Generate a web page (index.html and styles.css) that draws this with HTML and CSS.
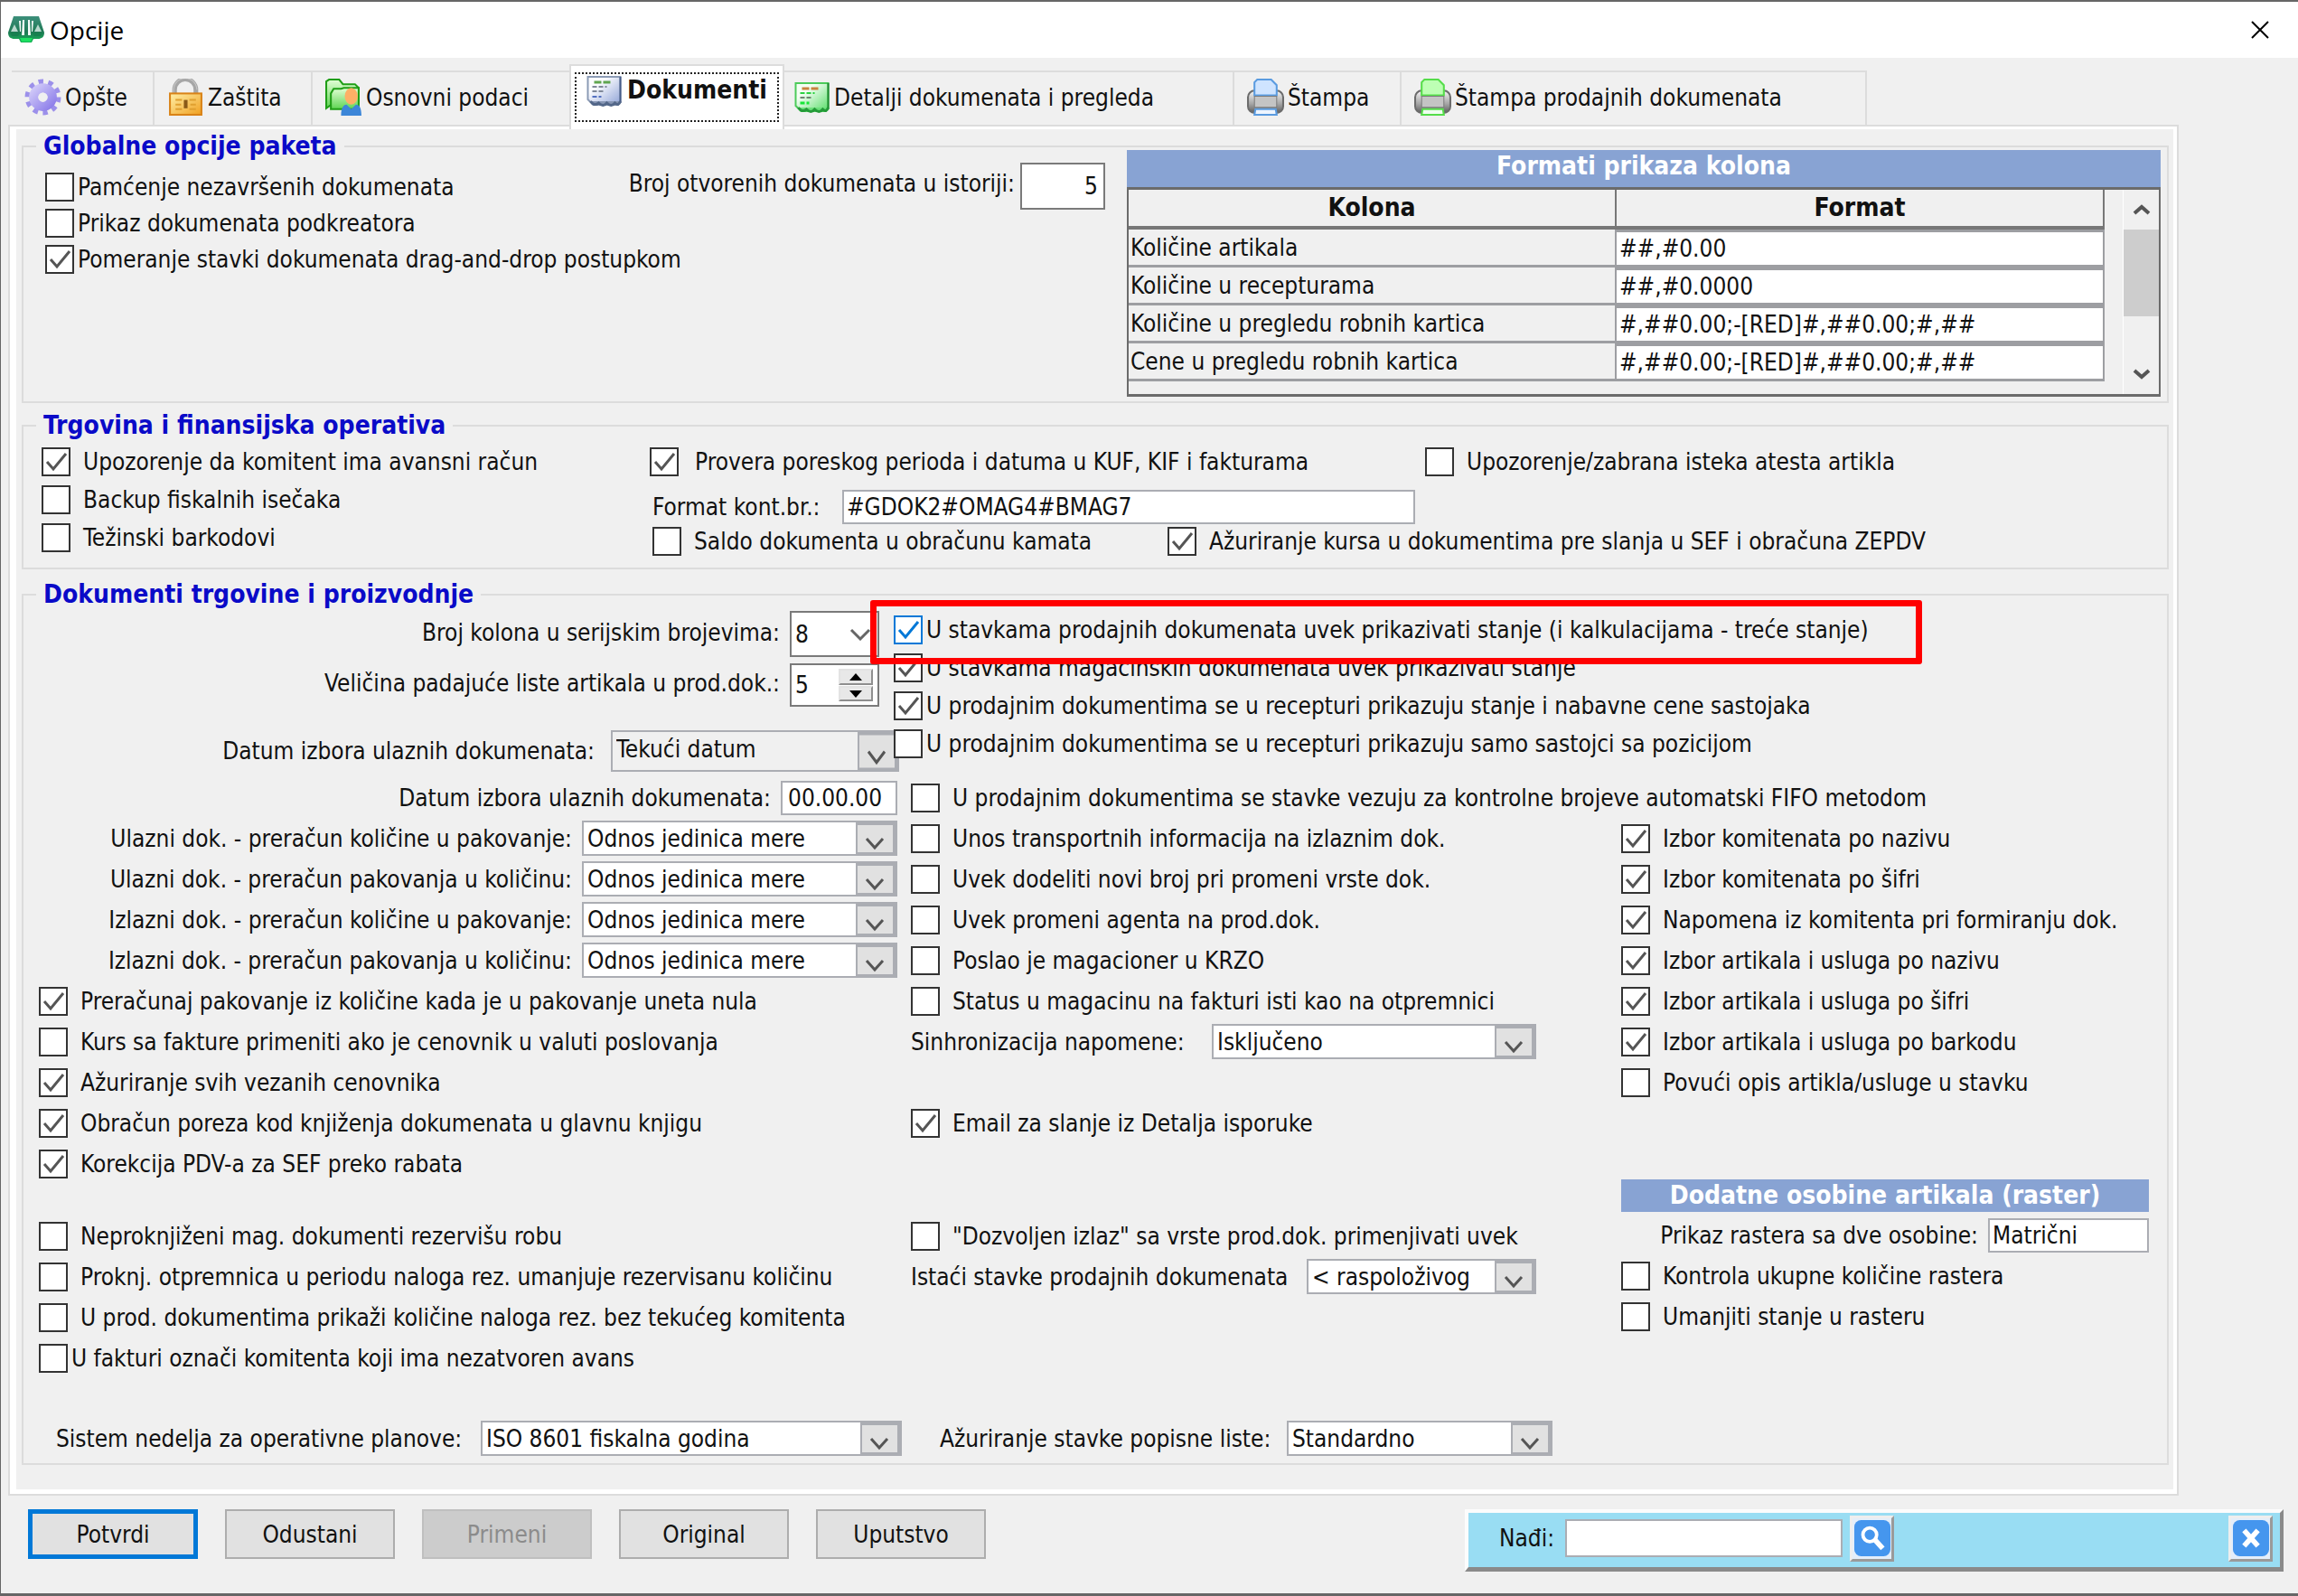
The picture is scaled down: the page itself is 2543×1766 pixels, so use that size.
FILE: index.html
```html
<!DOCTYPE html>
<html lang="sr-Latn">
<head>
<meta charset="utf-8">
<title>Opcije</title>
<link rel="stylesheet" href="styles.css">
</head>
<body>
<div class="window">
  <header class="titlebar">
    <svg class="app-icon" viewBox="0 0 40 32" aria-hidden="true">
      <defs><linearGradient id="scales" x1="0" y1="0" x2="0" y2="1"><stop offset="0" stop-color="#3d8f7b"/><stop offset=".6" stop-color="#1f7a55"/><stop offset="1" stop-color="#14b455"/></linearGradient></defs>
      <path d="M6 1h28l6 18c0 5-3 7-7 7h-5l-2 4H14l-2-4H7c-4 0-7-2-7-7z" fill="url(#scales)"/>
      <path d="M12 6h2v12h-1zM28 6h-2v12h1zM16 5h2v17h-3zM24 5h-2v17h3z" fill="#f4fbf8"/>
      <path d="M7 10l4 8H3zM33 10l4 8h-8z" fill="#b9d8cd"/>
      <path d="M2 19h11l-2 4H4zM27 19h11l-2 4h-7z" fill="#17804f"/>
      <path d="M13 25h14l-2 4H15z" fill="#1de060"/>
    </svg>
    <h1 class="title">Opcije</h1>
    <button class="close" type="button" aria-label="Zatvori"><svg viewBox="0 0 20 20"><path d="M1 1l18 18M19 1L1 19" stroke="#000" stroke-width="2"/></svg></button>
  </header>

  <nav class="tabs" role="tablist">
    <button class="tab tab-general" type="button" role="tab">
      <svg class="icon" viewBox="0 0 40 40" aria-hidden="true">
        <defs><linearGradient id="gear" x1="0" y1="0" x2="1" y2="1"><stop offset="0" stop-color="#cfc8f8"/><stop offset="1" stop-color="#8f80ea"/></linearGradient></defs>
        <circle cx="20" cy="20" r="16" fill="none" stroke="#9c90ea" stroke-width="7" stroke-dasharray="5 5.05"/>
        <circle cx="20" cy="20" r="10" fill="none" stroke="url(#gear)" stroke-width="10"/>
        <circle cx="20" cy="20" r="5" fill="#f0f0f0"/>
      </svg>Opšte</button>
    <button class="tab tab-lock" type="button" role="tab">
      <svg class="icon" viewBox="0 0 40 40" aria-hidden="true">
        <defs><linearGradient id="lock" x1="0" y1="0" x2="1" y2="1"><stop offset="0" stop-color="#fff0a8"/><stop offset="1" stop-color="#f0a020"/></linearGradient></defs>
        <path d="M8 17V12a11 11 0 0 1 23 0v5" fill="none" stroke="#a6a6a6" stroke-width="5"/>
        <path d="M7 17V12a12 12 0 0 1 25 0" fill="none" stroke="#c9c9c9" stroke-width="1"/>
        <rect x="3" y="16" width="34" height="23" fill="url(#lock)" stroke="#d98317" stroke-width="2"/>
        <path d="M9 23h7M24 23h7M9 28h6M25 28h6M9 33h7M24 33h7" stroke="#e0a030" stroke-width="2"/>
        <path d="M20 23v9" stroke="#8a5a18" stroke-width="4"/>
      </svg>Zaštita</button>
    <button class="tab tab-basic" type="button" role="tab">
      <svg class="icon" viewBox="0 0 40 40" aria-hidden="true">
        <defs><linearGradient id="folder" x1="0" y1="0" x2="0" y2="1"><stop offset="0" stop-color="#e2ffd6"/><stop offset="1" stop-color="#5ed452"/></linearGradient></defs>
        <path d="M1 3l3-2h11l4 5h13l4 4v17H8l-7 5z" fill="url(#folder)" stroke="#1f9e16" stroke-width="2"/>
        <path d="M6 33V16l3-5h8l3-1h16v23z" fill="url(#folder)" stroke="#1f9e16" stroke-width="2"/>
        <path d="M17 40c0-9 3-12 6-12l5 5 5-5c4 0 6 4 6 12z" fill="#3c86d8"/>
        <ellipse cx="28" cy="19" rx="7" ry="9" fill="#fdb066"/>
      </svg>Osnovni podaci</button>
    <button class="tab tab-docs active" type="button" role="tab" aria-selected="true">
      <span class="focus">
      <svg class="icon icon-doc" viewBox="0 0 40 34" aria-hidden="true">
        <defs><linearGradient id="docb" x1="0" y1="0" x2="1" y2="1"><stop offset=".3" stop-color="#fbfcff"/><stop offset="1" stop-color="#8ea2d6"/></linearGradient></defs>
        <path d="M2 1h36v27l-3 4H8l-6-6z" fill="url(#docb)" stroke="#8c9bb5" stroke-width="2"/>
        <path d="M38 1v29" stroke="#465c88" stroke-width="2"/>
        <path d="M9 7h19" stroke="#5fa54f" stroke-width="3" stroke-dasharray="8 2"/>
        <path d="M7 12h16M7 17h14" stroke="#7f8899" stroke-width="2" stroke-dasharray="5 2"/><path d="M7 23h10" stroke="#5370c0" stroke-width="2" stroke-dasharray="5 2"/>
        <path d="M5 28q4 6 9 2q5 5 9 0q5 5 9 0q4 4 6-2" fill="#8796b4" stroke="#536789" stroke-width="3"/>
      </svg>Dokumenti</span></button>
    <button class="tab tab-details" type="button" role="tab">
      <svg class="icon icon-doc" viewBox="0 0 40 34" aria-hidden="true">
        <defs><linearGradient id="docg" x1="0" y1="0" x2="1" y2="1"><stop offset=".3" stop-color="#f4fff4"/><stop offset="1" stop-color="#58dc68"/></linearGradient></defs>
        <path d="M2 1h36v27l-3 4H8l-6-6z" fill="url(#docg)" stroke="#4ccb5a" stroke-width="2"/>
        <path d="M38 1v29" stroke="#1f8b30" stroke-width="2"/>
        <path d="M9 7h19" stroke="#c88440" stroke-width="3" stroke-dasharray="8 2"/>
        <path d="M7 12h16" stroke="#2bd23f" stroke-width="2" stroke-dasharray="5 2"/><path d="M7 17h14" stroke="#6d8670" stroke-width="2" stroke-dasharray="5 2"/><path d="M7 23h10" stroke="#16e636" stroke-width="3" stroke-dasharray="5 2"/>
        <path d="M5 28q4 6 9 2q5 5 9 0q5 5 9 0q4 4 6-2" fill="#6be07a" stroke="#249a38" stroke-width="3"/>
      </svg>Detalji dokumenata i pregleda</button>
    <button class="tab tab-print" type="button" role="tab">
      <svg class="icon" viewBox="0 0 40 40" aria-hidden="true">
        <defs><linearGradient id="metal" x1="0" y1="0" x2="0" y2="1"><stop offset="0" stop-color="#f4f4f4"/><stop offset=".6" stop-color="#a4a4a4"/><stop offset="1" stop-color="#5e5e5e"/></linearGradient></defs>
        <rect x="1" y="13" width="38" height="24" rx="7" fill="url(#metal)" stroke="#6c6c6c" stroke-width="2"/>
        <path d="M8 18V4l3-3h15l6 6v11z" fill="#cfe4ff" stroke="#5a9be0" stroke-width="2"/>
        <path d="M8 19h24v12H8z" fill="#c4c4c4" stroke="#7c7c7c"/>
        <path d="M9 33h22l1 6H8z" fill="#eef5ff" stroke="#5a9be0" stroke-width="2"/>
      </svg>Štampa</button>
    <button class="tab tab-print-sales" type="button" role="tab">
      <svg class="icon" viewBox="0 0 40 40" aria-hidden="true">
        <rect x="1" y="13" width="38" height="24" rx="7" fill="url(#metal)" stroke="#6c6c6c" stroke-width="2"/>
        <path d="M8 18V4l3-3h15l6 6v11z" fill="#bdffb4" stroke="#55dd4a" stroke-width="2"/>
        <path d="M8 19h24v12H8z" fill="#c4c4c4" stroke="#7c7c7c"/>
        <path d="M9 33h22l1 6H8z" fill="#effff0" stroke="#55dd4a" stroke-width="2"/>
      </svg>Štampa prodajnih dokumenata</button>
  </nav>

  <main class="panel"><div class="panel-inner">
    <fieldset class="group">
      <legend>Globalne opcije paketa</legend>
      <div class="global">
        <div class="global-left">
          <div class="global-checks">
            <label class="check tight"><input type="checkbox">Pamćenje nezavršenih dokumenata</label>
            <label class="check tight"><input type="checkbox">Prikaz dokumenata podkreatora</label>
            <label class="check tight"><input type="checkbox" checked>Pomeranje stavki dokumenata drag-and-drop postupkom</label>
          </div>
          <div class="history"><label for="hist">Broj otvorenih dokumenata u istoriji:</label><input class="text dark" id="hist" type="text" value="5"></div>
        </div>
        <section class="formats">
          <h2 class="banner">Formati prikaza kolona</h2>
          <div class="frame">
            <table>
              <thead><tr><th>Kolona</th><th>Format</th></tr></thead>
              <tbody>
                <tr><td>Količine artikala</td><td><input type="text" aria-label="Količine artikala" value="##,#0.00"></td></tr>
                <tr><td>Količine u recepturama</td><td><input type="text" aria-label="Količine u recepturama" value="##,#0.0000"></td></tr>
                <tr><td>Količine u pregledu robnih kartica</td><td><input type="text" aria-label="Količine u pregledu robnih kartica" value="#,##0.00;-[RED]#,##0.00;#,##"></td></tr>
                <tr><td>Cene u pregledu robnih kartica</td><td><input type="text" aria-label="Cene u pregledu robnih kartica" value="#,##0.00;-[RED]#,##0.00;#,##"></td></tr>
              </tbody>
            </table>
            <div class="scrollbar" aria-hidden="true">
              <svg class="arrow" viewBox="0 0 20 12"><path d="M2 10l8-7 8 7" fill="none" stroke="#555" stroke-width="4"/></svg>
              <div class="thumb"></div>
              <svg class="arrow" viewBox="0 0 20 12"><path d="M2 2l8 7 8-7" fill="none" stroke="#555" stroke-width="4"/></svg>
            </div>
          </div>
        </section>
      </div>
    </fieldset>

    <fieldset class="group group-trade">
      <legend>Trgovina i finansijska operativa</legend>
      <div class="trade">
        <div class="trade-left">
          <label class="check"><input type="checkbox" checked>Upozorenje da komitent ima avansni račun</label>
          <label class="check"><input type="checkbox">Backup fiskalnih isečaka</label>
          <label class="check"><input type="checkbox">Težinski barkodovi</label>
        </div>
        <div class="trade-right">
          <div class="trade-row first">
            <label class="check wide"><input type="checkbox" checked>Provera poreskog perioda i datuma u KUF, KIF i fakturama</label>
            <label class="check"><input type="checkbox">Upozorenje/zabrana isteka atesta artikla</label>
          </div>
          <div class="trade-format"><label for="fmt">Format kont.br.:</label><input class="text" id="fmt" type="text" value="#GDOK2#OMAG4#BMAG7"></div>
          <div class="trade-row last">
            <label class="check"><input type="checkbox">Saldo dokumenta u obračunu kamata</label>
            <label class="check"><input type="checkbox" checked>Ažuriranje kursa u dokumentima pre slanja u SEF i obračuna ZEPDV</label>
          </div>
        </div>
      </div>
    </fieldset>

    <fieldset class="group group-docs">
      <legend>Dokumenti trgovine i proizvodnje</legend>
      <div class="docs-top">
        <div class="docs-top-left">
          <div class="field serials"><label for="ser">Broj kolona u serijskim brojevima:</label><select class="plain" id="ser"><option>8</option></select></div>
          <div class="field list-size"><label for="vel">Veličina padajuće liste artikala u prod.dok.:</label>
            <span class="spin"><input id="vel" type="text" value="5">
              <span class="spin-buttons"><button type="button" aria-label="Više"><svg viewBox="0 0 14 8"><path d="M7 0l7 8H0z"/></svg></button><button type="button" aria-label="Manje"><svg viewBox="0 0 14 8"><path d="M0 0h14L7 8z"/></svg></button></span></span></div>
          <div class="field date-kind"><label for="dat1">Datum izbora ulaznih dokumenata:</label><select id="dat1" disabled><option>Tekući datum</option></select></div>
        </div>
        <div class="docs-top-right">
          <label class="check tight highlight"><input type="checkbox" checked>U stavkama prodajnih dokumenata uvek prikazivati stanje (i kalkulacijama - treće stanje)</label>
          <label class="check tight"><input type="checkbox" checked>U stavkama magacinskih dokumenata uvek prikazivati stanje</label>
          <label class="check tight"><input type="checkbox" checked>U prodajnim dokumentima se u recepturi prikazuju stanje i nabavne cene sastojaka</label>
          <label class="check tight"><input type="checkbox">U prodajnim dokumentima se u recepturi prikazuju samo sastojci sa pozicijom</label>
        </div>
      </div>

      <div class="docs-main">
        <div class="col">
          <div class="field"><label for="dat2">Datum izbora ulaznih dokumenata:</label><input class="text date" id="dat2" type="text" value="00.00.00"></div>
          <div class="field"><label for="u1">Ulazni dok. - preračun količine u pakovanje:</label><select class="unit" id="u1"><option>Odnos jedinica mere</option></select></div>
          <div class="field"><label for="u2">Ulazni dok. - preračun pakovanja u količinu:</label><select class="unit" id="u2"><option>Odnos jedinica mere</option></select></div>
          <div class="field"><label for="u3">Izlazni dok. - preračun količine u pakovanje:</label><select class="unit" id="u3"><option>Odnos jedinica mere</option></select></div>
          <div class="field"><label for="u4">Izlazni dok. - preračun pakovanja u količinu:</label><select class="unit" id="u4"><option>Odnos jedinica mere</option></select></div>
          <div class="checks">
            <label class="check"><input type="checkbox" checked>Preračunaj pakovanje iz količine kada je u pakovanje uneta nula</label>
            <label class="check"><input type="checkbox">Kurs sa fakture primeniti ako je cenovnik u valuti poslovanja</label>
            <label class="check"><input type="checkbox" checked>Ažuriranje svih vezanih cenovnika</label>
            <label class="check"><input type="checkbox" checked>Obračun poreza kod knjiženja dokumenata u glavnu knjigu</label>
            <label class="check"><input type="checkbox" checked>Korekcija PDV-a za SEF preko rabata</label>
          </div>
          <div class="checks lower">
            <label class="check"><input type="checkbox">Neproknjiženi mag. dokumenti rezervišu robu</label>
            <label class="check"><input type="checkbox">Proknj. otpremnica u periodu naloga rez. umanjuje rezervisanu količinu</label>
            <label class="check"><input type="checkbox">U prod. dokumentima prikaži količine naloga rez. bez tekućeg komitenta</label>
            <label class="check tight"><input type="checkbox">U fakturi označi komitenta koji ima nezatvoren avans</label>
          </div>
        </div>

        <div class="col">
          <label class="check"><input type="checkbox">U prodajnim dokumentima se stavke vezuju za kontrolne brojeve automatski FIFO metodom</label>
          <label class="check"><input type="checkbox">Unos transportnih informacija na izlaznim dok.</label>
          <label class="check"><input type="checkbox">Uvek dodeliti novi broj pri promeni vrste dok.</label>
          <label class="check"><input type="checkbox">Uvek promeni agenta na prod.dok.</label>
          <label class="check"><input type="checkbox">Poslao je magacioner u KRZO</label>
          <label class="check"><input type="checkbox">Status u magacinu na fakturi isti kao na otpremnici</label>
          <div class="pair"><label for="sin">Sinhronizacija napomene:</label><select class="sync" id="sin"><option>Isključeno</option></select></div>
          <label class="check skip"><input type="checkbox" checked>Email za slanje iz Detalja isporuke</label>
          <div class="lower skip">
            <label class="check"><input type="checkbox">"Dozvoljen izlaz" sa vrste prod.dok. primenjivati uvek</label>
            <div class="pair"><label for="ist">Istaći stavke prodajnih dokumenata</label><select class="mark" id="ist"><option>&lt; raspoloživog</option></select></div>
          </div>
        </div>

        <div class="col">
          <label class="check skip"><input type="checkbox" checked>Izbor komitenata po nazivu</label>
          <label class="check"><input type="checkbox" checked>Izbor komitenata po šifri</label>
          <label class="check"><input type="checkbox" checked>Napomena iz komitenta pri formiranju dok.</label>
          <label class="check"><input type="checkbox" checked>Izbor artikala i usluga po nazivu</label>
          <label class="check"><input type="checkbox" checked>Izbor artikala i usluga po šifri</label>
          <label class="check"><input type="checkbox" checked>Izbor artikala i usluga po barkodu</label>
          <label class="check"><input type="checkbox">Povući opis artikla/usluge u stavku</label>
          <section class="raster">
            <h2 class="banner">Dodatne osobine artikala (raster)</h2>
            <div class="field"><label for="ras">Prikaz rastera sa dve osobine:</label><input class="text matrix" id="ras" type="text" value="Matrični"></div>
            <label class="check"><input type="checkbox">Kontrola ukupne količine rastera</label>
            <label class="check"><input type="checkbox">Umanjiti stanje u rasteru</label>
          </section>
        </div>
      </div>

      <div class="docs-bottom">
        <label for="sis">Sistem nedelja za operativne planove:</label><select class="weeks" id="sis"><option>ISO 8601 fiskalna godina</option></select>
        <label class="second" for="azu">Ažuriranje stavke popisne liste:</label><select class="census" id="azu"><option>Standardno</option></select>
      </div>
    </fieldset>
  </div></main>

  <footer class="footer">
    <div class="buttons">
      <button class="btn default" type="button">Potvrdi</button>
      <button class="btn" type="button">Odustani</button>
      <button class="btn" type="button" disabled>Primeni</button>
      <button class="btn" type="button">Original</button>
      <button class="btn" type="button">Uputstvo</button>
    </div>
    <div class="search">
      <label for="find">Nađi:</label><input class="text" id="find" type="text">
      <button class="tool" type="button" aria-label="Traži"><svg viewBox="0 0 42 42"><rect width="42" height="42" rx="8" fill="#4596ee"/><circle cx="18" cy="17" r="8" fill="none" stroke="#fff" stroke-width="4"/><path d="M24 23l9 10" stroke="#fff" stroke-width="6"/></svg></button>
      <button class="tool end" type="button" aria-label="Zatvori pretragu"><svg viewBox="0 0 42 42"><rect width="42" height="42" rx="8" fill="#4596ee"/><path d="M13 12l16 18M29 12L13 30" stroke="#fff" stroke-width="6"/></svg></button>
    </div>
  </footer>
</div>
</body>
</html>
```
FILE: styles.css
```css
*, *::after { box-sizing: border-box; }

body {
  margin: 0;
  background: #f0f0f0;
  color: #111;
  font-family: "DejaVu Sans Condensed", "DejaVu Sans", sans-serif;
  font-size: 26px;
  line-height: 32px;
}

input, select, button {
  margin: 0;
  font: inherit;
  color: inherit;
  border-radius: 0;
}

label { white-space: nowrap; }

.window {
  min-height: 100vh;
  display: flex;
  flex-direction: column;
  border: solid #666;
  border-width: 2px 0 3px 1px;
}

/* Title bar */
.titlebar {
  display: flex;
  align-items: center;
  gap: 6px;
  height: 62px;
  padding: 0 32px 0 8px;
  background: #fff;
}
.app-icon { width: 40px; height: 32px; }
.title {
  margin: 0;
  font: 400 28px/40px "Open Sans", sans-serif;
  color: #000;
}
.close {
  margin-left: auto;
  padding: 0;
  border: 0;
  background: none;
  line-height: 0;
}
.close svg { width: 20px; height: 20px; }

/* Tabs */
.tabs {
  display: flex;
  align-items: flex-end;
  padding: 7px 0 0 12px;
}
.tab {
  display: flex;
  align-items: center;
  gap: 4px;
  height: 60px;
  padding: 0 0 3px 14px;
  border: solid #dcdcdc;
  border-width: 2px 2px 0 0;
  background: #f0f0f0;
  white-space: nowrap;
}
.icon { width: 41px; height: 41px; flex: none; }
.icon-doc { height: 34px; }
.tab-general { width: 158px; }
.tab-lock { width: 175px; }
.tab-basic { width: 284px; border-right: 0; }
.tab-docs { width: 238px; }
.tab-details { width: 498px; padding-left: 10px; }
.tab-print { width: 185px; }
.tab-print-sales { width: 515px; }
.tab.active {
  position: relative;
  height: 72px;
  margin-bottom: -5px;
  padding: 7px 4px 8px;
  border-left-width: 2px;
  background: #fff;
  font-size: 28px;
  font-weight: 700;
}
.focus {
  display: flex;
  flex: 1;
  gap: 5px;
  height: 55px;
  padding: 2px 0 0 10px;
  border: 2px dotted #222;
}

/* Tab page */
.panel {
  margin: 0 132px 0 8px;
  padding: 3px 4px 5px 7px;
  border: 2px solid #dcdcdc;
  background: #fff;
}
.panel-inner {
  padding: 1px 5px 27px 6px;
  background: #f0f0f0;
}

.group {
  min-width: 0;
  margin: 0;
  padding: 0;
  border: 2px solid #dcdcdc;
}
.group-trade { margin-top: 7px; }
.group-docs { margin-top: 10px; }
legend {
  margin-left: 14px;
  padding: 0 8px;
  color: #0a0ac8;
  font-size: 28px;
  font-weight: 700;
  line-height: 36px;
}

/* Check boxes */
.check {
  display: flex;
  align-items: center;
  gap: 14px;
  height: 45px;
}
.check.tight { gap: 4px; }
.check.wide { gap: 18px; }
.check input {
  position: relative;
  appearance: none;
  flex: none;
  width: 32px;
  height: 32px;
  border: 2px solid #333;
  background: #fff;
}
.check input:checked {
  background: #fff url("data:image/svg+xml,%3Csvg xmlns='http://www.w3.org/2000/svg' viewBox='0 0 28 28'%3E%3Cpath d='M4 14l7 8L25 5' fill='none' stroke='%23555' stroke-width='3'/%3E%3C/svg%3E") center / 28px 28px no-repeat;
}

/* Text boxes and drop-downs */
.text {
  min-width: 0;
  height: 38px;
  padding: 0 3px;
  border: 2px solid #abadb3;
  background: #fff;
}
select {
  appearance: none;
  height: 39px;
  padding: 0 50px 0 4px;
  border: 2px solid #abadb3;
  background: #fff url("data:image/svg+xml,%3Csvg xmlns='http://www.w3.org/2000/svg' viewBox='0 0 44 35' preserveAspectRatio='none'%3E%3Cpath d='M0 0h44v35H0z' fill='%23abadb3'/%3E%3Cpath d='M2 3h39v30H2z' fill='%23e1e1e1'/%3E%3Cpath d='M12 18l9 10 9-10' fill='none' stroke='%23555' stroke-width='3'/%3E%3C/svg%3E") right center / 44px 100% no-repeat;
}
select:disabled { background-color: #f0f0f0; color: #111; opacity: 1; }
select.plain {
  border-color: #7a7a7a;
  background: #fff url("data:image/svg+xml,%3Csvg xmlns='http://www.w3.org/2000/svg' viewBox='0 0 24 14'%3E%3Cpath d='M2 2l10 10L22 2' fill='none' stroke='%23666' stroke-width='3'/%3E%3C/svg%3E") right 7px center / 24px 14px no-repeat;
}

.banner {
  margin: 0;
  background: #88a3d3;
  color: #fff;
  font-size: 28px;
  font-weight: 700;
  line-height: 36px;
  text-align: center;
}

.field {
  display: flex;
  align-items: center;
  justify-content: flex-end;
  gap: 11px;
  height: 45px;
}

/* Global options */
.global {
  display: grid;
  grid-template-columns: 1173fr 1144fr;
  gap: 24px;
  padding: 0 7px 5px 24px;
}
.global-left {
  display: flex;
  justify-content: space-between;
  align-items: flex-start;
}
.global-checks { padding-top: 7px; width: 600px; }
.global-checks .check { height: 40px; }
.history { display: flex; align-items: center; gap: 6px; }
.history label { padding-bottom: 6px; }
.history .text {
  width: 94px;
  height: 52px;
  border-color: #7a7a7a;
  text-align: right;
  padding-right: 6px;
}
.formats { margin-top: -14px; }
.formats .banner { padding-bottom: 5px; }
.frame {
  display: flex;
  justify-content: space-between;
  height: 232px;
  border: 3px solid #6b6b6b;
  border-width: 3px 2px 3px 2px;
}
table {
  width: calc(100% - 60px);
  align-self: flex-start;
  table-layout: fixed;
  border-collapse: separate;
  border-spacing: 0;
}
th {
  height: 44px;
  padding: 0;
  border: solid #777;
  border-width: 0 2px 4px 0;
  font-size: 28px;
  font-weight: 700;
}
th:first-child { width: 50%; }
td {
  height: 42px;
  padding: 0 0 0 2px;
  border: solid #9d9ea2;
  border-width: 0 2px 3px 0;
}
td + td { padding: 0; }
td input {
  display: block;
  width: 100%;
  height: 39px;
  padding: 0 3px;
  border: 0;
  border-top: 3px solid #9d9ea2;
  background: #fff;
}
.scrollbar {
  display: flex;
  flex-direction: column;
  width: 40px;
  border-left: 1px solid #fff;
}
.arrow { width: 20px; height: 12px; margin: 16px auto; }
.thumb { height: 96px; margin-bottom: auto; background: #cdcdcd; }

/* Trade and finance */
.trade {
  display: grid;
  grid-template-columns: 673fr 1679fr;
  padding: 1px 0 12px 20px;
}
.trade .check { height: 42px; }
.trade-row { display: grid; }
.trade-row.first { grid-template-columns: 858fr 821fr; }
.trade-row.last { grid-template-columns: 570fr 1106fr; padding-left: 3px; }
.trade-row.last .check { height: 34px; }
.trade-format {
  display: flex;
  align-items: center;
  height: 50px;
  padding: 8px 0 0 3px;
}
.trade-format label { width: 210px; }
.trade-format .text { width: 634px; }

/* Trade and production documents */
.docs-top { display: grid; grid-template-columns: 963fr 1409fr; }
.docs-top-left { padding-right: 16px; }
.docs-top-right .check { height: 42px; }
.serials { height: 51px; }
.serials select { width: 99px; height: 51px; }
.list-size { height: 48px; margin-top: 7px; }
.serials label, .list-size label { padding-bottom: 4px; }
.date-kind { height: 46px; margin: 26px -22px 0 0; gap: 18px; }
.date-kind select { width: 319px; height: 46px; padding-bottom: 4px; }
.spin {
  display: flex;
  width: 99px;
  height: 48px;
  padding: 4px 5px 4px 4px;
  border: 2px solid #7a7a7a;
  background: #fff;
}
.spin input { width: 48px; min-width: 0; padding: 0; border: 0; background: none; }
.spin-buttons { display: flex; flex-direction: column; flex: 1; gap: 1px; }
.spin-buttons button {
  flex: 1;
  padding: 0;
  border: 2px outset #e3e3e3;
  background: #e8e8e8;
  line-height: 0;
}
.spin-buttons svg { width: 14px; height: 8px; }

.highlight { position: relative; }
.highlight input:checked {
  border-color: #0078d7;
  background-image: url("data:image/svg+xml,%3Csvg xmlns='http://www.w3.org/2000/svg' viewBox='0 0 28 28'%3E%3Cpath d='M4 14l7 8L25 5' fill='none' stroke='%230078d7' stroke-width='3'/%3E%3C/svg%3E");
}
.highlight::after {
  content: "";
  position: absolute;
  z-index: 1;
  left: -26px;
  top: -12px;
  width: 1164px;
  height: 71px;
  border: 7px solid #f00;
  border-radius: 3px;
  pointer-events: none;
}

.docs-main {
  display: grid;
  grid-template-columns: 982fr 786fr 604fr;
  margin-top: 6px;
}
.col { min-width: 0; }
.col > .field { padding-right: 15px; }
.checks { padding-left: 17px; }
.lower { margin-top: 35px; }
.skip { margin-top: 45px; }
.lower.skip { margin-top: 80px; }
.date { width: 129px; padding: 0 6px; }
.unit { width: 349px; }
.pair {
  display: flex;
  align-items: center;
  justify-content: space-between;
  width: 692px;
  height: 45px;
}
.sync { width: 359px; }
.mark { width: 254px; padding-right: 44px; }
.raster { margin-top: 85px; padding-right: 20px; }
.raster .field { margin-top: 3px; }
.matrix { width: 178px; }

.docs-bottom {
  display: flex;
  align-items: center;
  padding: 47px 0 8px 36px;
}
.docs-bottom label { width: 470px; }
.docs-bottom .second { width: 384px; margin-left: 42px; }
.weeks { width: 466px; }
.census { width: 294px; }

/* Footer */
.footer {
  display: flex;
  justify-content: space-between;
  align-items: flex-start;
  padding: 15px 16px 0 30px;
}
.buttons { display: flex; gap: 30px; }
.btn {
  width: 188px;
  height: 55px;
  padding: 0;
  border: 2px solid #adadad;
  background: #e1e1e1;
}
.btn.default { border: 5px solid #0078d7; }
.btn:disabled { border-color: #bfbfbf; background: #ccc; color: #8b8b8b; }
.search {
  display: flex;
  align-items: center;
  width: 906px;
  height: 69px;
  padding: 0 8px 4px 34px;
  border: solid;
  border-width: 4px 4px 5px;
  border-color: #fcfcfc #8a8a8a #8a8a8a #fcfcfc;
  background: #99ddf3;
}
.search label { width: 73px; }
.search .text { width: 307px; height: 42px; }
.tool {
  width: 49px;
  height: 51px;
  margin-left: 8px;
  padding: 0;
  border: 3px outset #eee;
  background: #e4eefa;
  line-height: 0;
}
.tool svg { width: 40px; height: 42px; }
.tool.end { margin-left: auto; }
```
